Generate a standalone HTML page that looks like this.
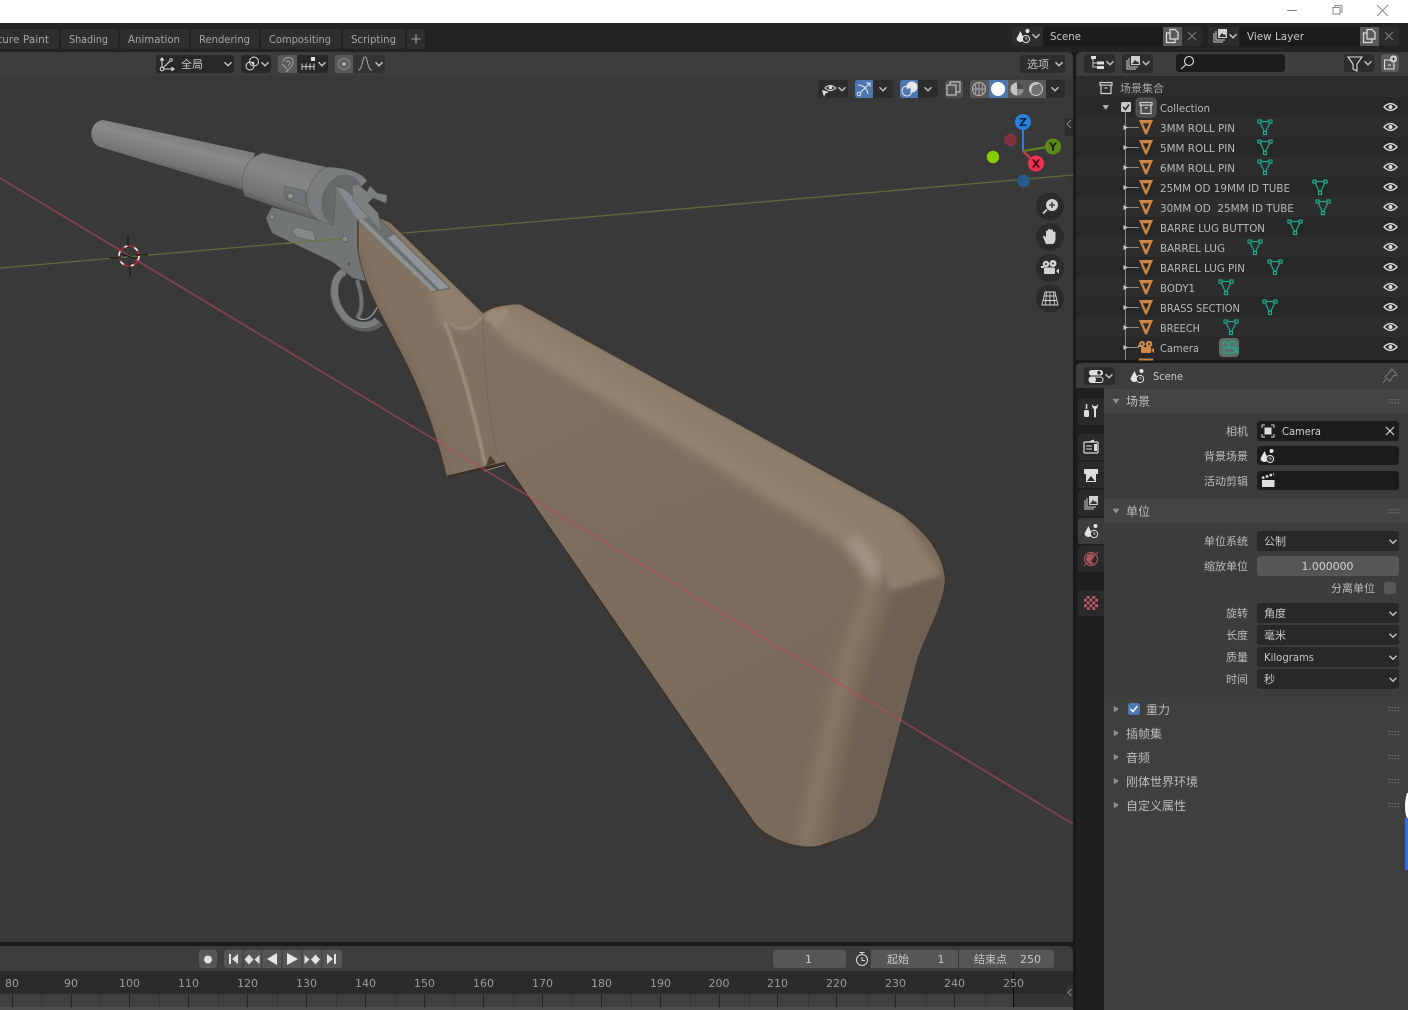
<!DOCTYPE html>
<html lang="zh">
<head>
<meta charset="utf-8">
<title>Blender</title>
<style>
html,body{margin:0;padding:0;background:#1a1a1a;width:1408px;height:1010px;overflow:hidden}
svg{display:block}
text{font-family:"DejaVu Sans","Noto Sans CJK SC",sans-serif;font-size:11px;fill:#b4b4b4;white-space:pre}
.t{fill:#a6a6a6}
.l{fill:#bdbdbd;text-anchor:end}
.o{fill:#b8b8b8}
.h{fill:#bdbdbd;font-size:12px}
.c{text-anchor:middle}
.r{fill:#9c9c9c;text-anchor:middle}
.chev{fill:none;stroke:#c4c4c4;stroke-width:1.4}
</style>
</head>
<body>
<svg width="1408" height="1010" viewBox="0 0 1408 1010" xmlns="http://www.w3.org/2000/svg">
<defs>
<filter id="b1" x="-30%" y="-30%" width="160%" height="160%"><feGaussianBlur stdDeviation="1"/></filter>
<filter id="b3" x="-30%" y="-30%" width="160%" height="160%"><feGaussianBlur stdDeviation="3.500"/></filter>
<filter id="b6" x="-30%" y="-30%" width="160%" height="160%"><feGaussianBlur stdDeviation="6"/></filter>
<linearGradient id="gBar2" gradientUnits="userSpaceOnUse" x1="180" y1="132" x2="170" y2="172"><stop offset="0" stop-color="#767878"/><stop offset=".35" stop-color="#8a8c8c"/><stop offset=".8" stop-color="#737575"/><stop offset="1" stop-color="#5c5e5e"/></linearGradient>
<linearGradient id="gThick" gradientUnits="userSpaceOnUse" x1="300" y1="158" x2="282" y2="212"><stop offset="0" stop-color="#787a7a"/><stop offset=".4" stop-color="#868888"/><stop offset=".85" stop-color="#707272"/><stop offset="1" stop-color="#525454"/></linearGradient>
<linearGradient id="gWood" gradientUnits="userSpaceOnUse" x1="500" y1="300" x2="760" y2="800"><stop offset="0" stop-color="#827261"/><stop offset=".5" stop-color="#7d6d5d"/><stop offset="1" stop-color="#7a6a5a"/></linearGradient>
<clipPath id="cWood"><path id="woodp" d="M358,220 L376,216 L390,222 L483,313 C490,308 500,304 520,304 L900,513 C925,530 945,555 945,580 C944,605 925,635 917,660 L877,813 C872,825 865,828 855,833 L820,846 C805,849 785,845 770,836 C762,832 755,825 750,817 L505,463 L492,467 L447,477 C438,440 425,400 405,360 C385,320 365,290 358,250 Z"/></clipPath>

<path id="chev" class="chev" d="M-3.500,-1.800 L0,1.800 L3.500,-1.800"/>
<g id="mesh"><path fill="#cf8644" fill-rule="evenodd" d="M-7,-7 L7,-7 L0.8,7.500 L-0.8,7.500 Z M-3.200,-3.800 L3.200,-3.800 L0,3.200 Z"/></g>
<g id="data" fill="none" stroke="#20aa88" stroke-width="1.200"><path d="M-5.500,-5.500 L5.500,-5.500 L0,6 Z"/><rect x="-7" y="-7" width="3" height="3" fill="#2a2a2a"/><rect x="4" y="-7" width="3" height="3" fill="#2a2a2a"/><rect x="-1.500" y="4.500" width="3" height="3" fill="#2a2a2a"/></g>
<g id="eye"><path d="M-6.500,0 Q0,-6.800 6.500,0 Q0,6.800 -6.500,0Z" fill="none" stroke="#dcdcdc" stroke-width="1.400"/><circle r="2" fill="#dcdcdc"/></g>
<g id="scene"><path d="M-2.500,-5 L-6.500,2.500 A3.800,3.800 0 0 0 1,3 Z" fill="#e4e4e4"/><circle cx="4.500" cy="-5" r="2" fill="#e4e4e4"/><circle cx="3" cy="3" r="3.600" fill="#333" stroke="#e4e4e4" stroke-width="1"/><path d="M3,1 V3 H4.500" stroke="#e4e4e4" stroke-width=".7" fill="none"/></g>
<g id="copy" fill="none" stroke="#e0e0e0" stroke-width="1.200"><path d="M-2,-6.500 H3 L6,-3.500 V3 H-2 Z"/><path d="M-2,-3 H-5.500 V6.500 H3 V3"/></g>
<path id="x" d="M-3.800,-3.800 L3.800,3.800 M3.800,-3.800 L-3.800,3.800" stroke="#777" stroke-width="1.200" fill="none"/>
<g id="layers" fill="none" stroke="#cfcfcf" stroke-width="1"><path d="M-6,-3 V6 H3"/><path d="M-4,-5 V4 H5"/><rect x="-2" y="-7" width="9" height="9" fill="#d0d0d0" stroke="none"/><path d="M-1,1 L2,-3 L4,-1 L5,-2 L6,1 Z" fill="#333" stroke="none"/></g>
<g id="tree"><rect x="-6" y="-7" width="5" height="3" fill="#ddd"/><path d="M-4,-4 V4 H0 M-4,0 H0" stroke="#ccc" fill="none"/><rect x="0" y="-1.500" width="7" height="3" fill="#ddd"/><rect x="0" y="3" width="7" height="3" fill="#ddd"/></g>
<g id="coll" fill="none" stroke="#d0d0d0" stroke-width="1.200"><rect x="-6" y="-5.500" width="12" height="2.600"/><path d="M-5,-2.900 V5.500 H5 V-2.900"/><path d="M-1.500,0 H1.500"/></g>
<g id="grip" fill="#777"><rect x="0" y="0" width="1.300" height="1.300"/><rect x="3" y="0" width="1.300" height="1.300"/><rect x="6" y="0" width="1.300" height="1.300"/><rect x="9" y="0" width="1.300" height="1.300"/><rect x="0" y="3" width="1.300" height="1.300"/><rect x="3" y="3" width="1.300" height="1.300"/><rect x="6" y="3" width="1.300" height="1.300"/><rect x="9" y="3" width="1.300" height="1.300"/></g>
<path id="ad" d="M-3.500,-2.200 H3.500 L0,2.800 Z" fill="#8f8f8f"/>
<path id="ar" d="M-2.200,-3.200 V3.200 L3,0 Z" fill="#8f8f8f"/>
</defs>

<!-- window bar -->
<rect width="1408" height="23" fill="#fff"/>
<path d="M1287,10.500 H1297" stroke="#8a8a8a" fill="none"/>
<path d="M1333,7.500 H1340 V14 H1333 Z M1335,7.500 V5.500 H1342 V12 H1340" stroke="#8a8a8a" fill="none"/>
<path d="M1377,5 L1388,16 M1388,5 L1377,16" stroke="#8a8a8a" fill="none"/>

<!-- top bar -->
<rect y="23" width="1408" height="29" fill="#232323"/>
<path d="M0,29 H56 Q59,29 59,32 V49 H0 Z" fill="#2e2e2e"/>
<rect x="61" y="29" width="57" height="20" rx="3" fill="#2e2e2e"/>
<rect x="120" y="29" width="69" height="20" rx="3" fill="#2e2e2e"/>
<rect x="191" y="29" width="68" height="20" rx="3" fill="#2e2e2e"/>
<rect x="261" y="29" width="80" height="20" rx="3" fill="#2e2e2e"/>
<rect x="343" y="29" width="62" height="20" rx="3" fill="#2e2e2e"/>
<rect x="407" y="29" width="18" height="20" rx="3" fill="#2e2e2e"/>
<text class="t" x="-2" y="43" textLength="51" lengthAdjust="spacingAndGlyphs">ture Paint</text>
<text class="t" x="69" y="43" textLength="39" lengthAdjust="spacingAndGlyphs">Shading</text>
<text class="t" x="128" y="43" textLength="52" lengthAdjust="spacingAndGlyphs">Animation</text>
<text class="t" x="199" y="43" textLength="51" lengthAdjust="spacingAndGlyphs">Rendering</text>
<text class="t" x="269" y="43" textLength="62" lengthAdjust="spacingAndGlyphs">Compositing</text>
<text class="t" x="351" y="43" textLength="45" lengthAdjust="spacingAndGlyphs">Scripting</text>
<path d="M416,34.500 V43.500 M411.500,39 H420.500" stroke="#a6a6a6" stroke-width="1.100"/>

<!-- scene / view layer selectors -->
<rect x="1012" y="27" width="190" height="19" rx="4" fill="#2c2c2c"/>
<rect x="1043" y="27" width="120" height="19" fill="#1c1c1c"/>
<rect x="1163" y="27" width="19" height="19" fill="#5a5a5a"/>
<use href="#scene" x="1023" y="36"/><use href="#chev" x="1036" y="36"/>
<text x="1050" y="40" textLength="31" lengthAdjust="spacingAndGlyphs" style="fill:#c8c8c8">Scene</text>
<use href="#copy" x="1172" y="36"/><use href="#x" x="1192" y="36"/>
<rect x="1208" y="27" width="191" height="19" rx="4" fill="#2c2c2c"/>
<rect x="1239" y="27" width="121" height="19" fill="#1c1c1c"/>
<rect x="1360" y="27" width="19" height="19" fill="#5a5a5a"/>
<use href="#layers" x="1220" y="36"/><use href="#chev" x="1233" y="36"/>
<text x="1247" y="40" textLength="57" lengthAdjust="spacingAndGlyphs" style="fill:#c8c8c8">View Layer</text>
<use href="#copy" x="1369" y="36"/><use href="#x" x="1389" y="36"/>

<!-- viewport -->
<path d="M0,52 H1067 Q1073,52 1073,58 V942 H0 Z" fill="#393939"/>
<path d="M0,52 H1067 Q1073,52 1073,58 V76 H0 Z" fill="#3d3d3d"/>
<path d="M0,140 Q400,110 1073,100" stroke="#3c3c3c" fill="none"/>

<!-- green axis -->
<line x1="0" y1="268" x2="1073" y2="175" stroke="#5c6b3c" stroke-width="1.300"/>

<!-- gun: barrel -->
<path d="M103,120 L255,153 L243,190 L100,147 C88,143 88,122 103,120Z" fill="url(#gBar2)"/>
<path d="M263,153 L330,168 L320,222 L245,196 C240,185 240,160 263,153Z" fill="url(#gThick)" stroke="#5a5c5c" stroke-width=".6"/>
<path d="M328,167 C345,168 362,172 367,181 L350,197 L336,187 L334,225 C320,224 305,215 307,195 C310,180 318,170 328,167Z" fill="#7a7d7d" stroke="#5a5c5c" stroke-width=".6"/>
<ellipse cx="342" cy="200" rx="20" ry="26" transform="rotate(20 342 200)" fill="#666969"/>
<!-- lug on barrel -->
<path d="M284,186 L306,191 L306,206 L285,199Z" fill="#717474" stroke="#5a5c5c" stroke-width=".6"/>
<circle cx="290.500" cy="196" r="3" fill="#8d9090" stroke="#555" stroke-width=".7"/>
<!-- trigger guard -->
<path d="M345,272 C332,276 330,300 343,315 C352,328 370,332 380,322" fill="none" stroke="#5e6060" stroke-width="8"/>
<path d="M345,271 C333,275 331,298 342,313 C350,325 367,329 377,320" fill="none" stroke="#7b7e7e" stroke-width="6.500"/>
<path d="M357,280 C364,300 362,312 357,318" fill="none" stroke="#6e7171" stroke-width="4"/>
<path d="M358,318 C366,322 372,318 378,306" fill="none" stroke="#9a9c9c" stroke-width="1.300"/>
<!-- receiver plate -->
<path d="M336,187 L334,225 L272,207 L266,218 L272,233 L333,262 L353,278 L370,282 L400,240 L345,189Z" fill="#727575" stroke="#5a5c5c" stroke-width=".5"/>
<circle cx="272" cy="217" r="2.400" fill="#8a8d8d" stroke="#555" stroke-width=".6"/>
<circle cx="345" cy="239" r="2.800" fill="#8a8d8d" stroke="#555" stroke-width=".7"/>
<circle cx="349" cy="264" r="1.500" fill="#555"/>
<path d="M297,227 L312,231 Q316,235 315,241 L300,238 Q291,235 293,229Z" fill="#858888" stroke="#5a5c5c" stroke-width=".6"/>

<!-- wood -->
<use href="#woodp" fill="url(#gWood)" stroke="#3b3126" stroke-width="1.200"/>
<g clip-path="url(#cWood)">
  <path d="M483,313 L520,304 L900,513 L945,580 L893,592 L860,540 L510,345Z" fill="#8e7e6c" filter="url(#b3)"/>
  <path d="M495,318 L767,488 C810,515 860,535 873,573" fill="none" stroke="#94846f" stroke-width="17" filter="url(#b6)"/>
  <path d="M873,573 C875,590 860,620 850,650 L815,795 L805,845" fill="none" stroke="#877764" stroke-width="16" filter="url(#b6)"/>
  <path d="M850,540 C862,550 872,560 875,580" fill="none" stroke="#a89988" stroke-width="12" filter="url(#b6)"/>
  <path d="M893,592 L950,572 L925,660 L880,830 L830,852 L833,813 L860,690Z" fill="#6e6153" filter="url(#b3)"/>
  <path d="M390,222 L483,313 L470,330 L440,325 L432,292Z" fill="#8f7f6d" filter="url(#b3)"/>
  <path d="M358,250 C365,290 385,320 405,360 C425,400 438,440 447,477" fill="none" stroke="#7a6b5c" stroke-width="10" filter="url(#b3)"/>
  <path d="M445,323 C462,365 476,420 485,465" fill="none" stroke="#a3937f" stroke-width="2.800" filter="url(#b1)"/>
  <path d="M450,323 C458,331 472,331 481,317" fill="none" stroke="#a3937f" stroke-width="1.800" filter="url(#b1)"/>
  <path d="M483,317 C484,380 490,420 497,453" fill="none" stroke="#6f6050" stroke-width=".7"/>
  <path d="M483,318 C487,310 498,306 510,310 L498,330Z" fill="#988875" filter="url(#b1)"/>
</g>
<!-- slot over wood -->
<path d="M336,187 L344,189 L376,216 L358,220Z" fill="#858a8c"/>
<path d="M358,220 L376,216 L450,288 L432,292Z" fill="#6c7070"/>
<path d="M358,220 L363,219 L437,291 L432,292Z" fill="#8b9091"/>
<path d="M395,234 L450,288 L440,290 L388,238Z" fill="#90959a"/>
<path d="M376,216 L450,288" fill="none" stroke="#565a5a" stroke-width=".8"/>
<path d="M432,292 L450,288" stroke="#6d6052" stroke-width="1"/>
<!-- hammer -->
<path d="M352,186 L358,184 L367,192 L370,186 L377,193 L387,195 L386,203 L373,198 L368,203 L378,213 L382,232 L376,226 L353,200Z" fill="#7c7f7f" stroke="#5a5c5c" stroke-width=".5"/>
<path d="M486,466 L490,455 L496,463Z" fill="#4a3f33"/>
<path d="M448,476.500 L505,463" stroke="#3a3026" stroke-width="2.200"/>
<path d="M484,471 L505,465" stroke="#a3937f" stroke-width=".8"/>

<!-- green axis over metal -->
<line x1="285" y1="243.500" x2="342" y2="238.500" stroke="#66783c" stroke-width="1.200"/>
<!-- red axis -->
<line x1="0" y1="178" x2="1073" y2="824" stroke="#c0485a" stroke-width="1.500" opacity=".62"/>

<!-- 3D cursor -->
<circle cx="129" cy="256" r="10" fill="none" stroke="#b02a30" stroke-width="1.600"/>
<circle cx="129" cy="256" r="10" fill="none" stroke="#eee" stroke-width="1.600" stroke-dasharray="4.500 6"/>
<path d="M109,258 H121 M136,255 H148 M128,236 V248 M130,263 V277 M122,254 L136,259" stroke="#111" stroke-width="1" fill="none"/>

<!-- viewport header controls -->
<rect x="156" y="55" width="78" height="18" rx="3" fill="#282828"/>
<path d="M162,60 V69 H173 M162,69 L171,60" fill="none" stroke="#ddd" stroke-width="1"/><path d="M162,57 l-2.500,3.500 h5z M175,69 l-3.500,-2.500 v5z" fill="#ddd"/><circle cx="162" cy="69" r="1.800" fill="#282828" stroke="#ddd"/><circle cx="171" cy="60" r="1.300" fill="#282828" stroke="#ddd" stroke-width=".8"/>
<text x="181" y="68" style="fill:#c8c8c8">全局</text>
<use href="#chev" x="228" y="64"/>
<rect x="241" y="55" width="30" height="18" rx="3" fill="#282828"/>
<circle cx="250" cy="66" r="4" fill="none" stroke="#ddd" stroke-width="1"/><circle cx="254" cy="61.500" r="4.500" fill="none" stroke="#ddd" stroke-width="1"/><circle cx="253" cy="63" r="1.300" fill="#ddd"/>
<use href="#chev" x="265" y="64"/>
<rect x="278" y="55" width="50" height="18" rx="3" fill="#282828"/>
<path d="M281,55 H297 V73 H281 Q278,73 278,70 V58 Q278,55 281,55Z" fill="#5a5a5a"/>
<path d="M283,62 A5.500,5.500 0 0 1 293,60 Q294,64 290,68 L286,72 M282,64 L287,69 M286,62 A2.500,2.500 0 0 1 290,62 Q290,64 288,66" fill="none" stroke="#a0a0a0" stroke-width="1"/>
<path d="M302,63.500 V70 M306,63.500 V70 M310,63.500 V70 M314,63.500 V70 M302,66.700 H314" stroke="#ddd" stroke-width=".9"/><rect x="311" y="57" width="4" height="4" fill="#e0e0e0"/>
<use href="#chev" x="322" y="64"/>
<rect x="335" y="55" width="50" height="18" rx="3" fill="#333"/>
<path d="M338,55 H353 V73 H338 Q335,73 335,70 V58 Q335,55 338,55Z" fill="#5a5a5a"/>
<circle cx="344" cy="64" r="5.500" fill="none" stroke="#8a8a8a"/><circle cx="344" cy="64" r="1.800" fill="#bbb"/>
<path d="M358,70 C363,70 362,57 365,57 C368,57 367,70 372,70" fill="none" stroke="#a6a6a6" stroke-width="1"/>
<use href="#chev" x="379" y="64"/>

<rect x="1020" y="55" width="45" height="18" rx="3" fill="#2d2d2d"/>
<text x="1027" y="68" style="fill:#c0c0c0">选项</text>
<use href="#chev" x="1059" y="64"/>

<!-- overlay row -->
<rect x="818" y="80" width="30" height="18" rx="3" fill="#2c2c2c"/>
<path d="M825,88 Q830,83 836,88 Q830,93 825,88Z" fill="none" stroke="#ddd"/><circle cx="830.500" cy="87.500" r="1.800" fill="#ddd"/><path d="M822,90 L829,92 L825.500,93.500 L824,97Z" fill="#ddd"/>
<use href="#chev" x="842" y="89"/>
<rect x="855" y="80" width="38" height="18" rx="3" fill="#2c2c2c"/>
<path d="M858,80 H873 V98 H858 Q855,98 855,95 V83 Q855,80 858,80Z" fill="#4d77b0"/>
<path d="M858,85 Q866,85 868,94 M860,93 L870,83 M866,83 H870 V87" fill="none" stroke="#e6e6e6"/><circle cx="859" cy="94" r="1.800" fill="none" stroke="#e6e6e6"/>
<use href="#chev" x="883" y="89"/>
<rect x="900" y="80" width="38" height="18" rx="3" fill="#2c2c2c"/>
<path d="M903,80 H918 V98 H903 Q900,98 900,95 V83 Q900,80 903,80Z" fill="#4d77b0"/>
<circle cx="907" cy="91" r="5" fill="none" stroke="#e6e6e6"/><circle cx="912" cy="87" r="5.500" fill="#e6e6e6"/><circle cx="909" cy="90" r="1.800" fill="#4d77b0"/>
<use href="#chev" x="928" y="89"/>
<rect x="945" y="80" width="18" height="18" rx="3" fill="#505050"/>
<path d="M947,85 H956 V95 H947Z M950,85 V82 H960 V92 H956" fill="none" stroke="#d8d8d8"/>
<rect x="970" y="80" width="95" height="18" rx="3" fill="#2c2c2c"/>
<path d="M973,80 H989 V98 H973 Q970,98 970,95 V83 Q970,80 973,80Z" fill="#585858"/>
<rect x="989" y="80" width="19" height="18" fill="#4d77b0"/>
<rect x="1008" y="80" width="19" height="18" fill="#585858"/>
<rect x="1027" y="80" width="19" height="18" fill="#585858"/>
<circle cx="979" cy="89" r="6.500" fill="none" stroke="#b8b8b8"/><path d="M972.500,89 H985.500 M979,82.500 V95.500 M975,84 Q977,89 975,94 M983,84 Q981,89 983,94" fill="none" stroke="#b8b8b8" stroke-width=".8"/>
<circle cx="998" cy="89" r="7" fill="#fff"/>
<circle cx="1017" cy="89" r="6.500" fill="#c4c4c4"/><path d="M1017,89 V82.500 A6.500,6.500 0 0 1 1023.500,89Z" fill="#4c4c4c"/><path d="M1017,89 H1023.500 A6.500,6.500 0 0 1 1017,95.500Z" fill="#8c8c8c"/>
<circle cx="1036" cy="89" r="6.500" fill="#707070" stroke="#c8c8c8"/><path d="M1031,92 A6,6 0 0 1 1038,84" fill="none" stroke="#d8d8d8" stroke-width="1.400"/>
<use href="#chev" x="1055" y="89"/>

<!-- nav gizmo -->
<path d="M1065,118 H1073 V136 H1065 Z" fill="#2c2c2c"/>
<path d="M1071,120 L1067,124 L1071,128" fill="none" stroke="#888"/>
<line x1="1023" y1="151" x2="1023" y2="128" stroke="#2a80e0" stroke-width="2"/>
<line x1="1023" y1="151" x2="1047" y2="147" stroke="#5c8a1a" stroke-width="2"/>
<line x1="1023" y1="151" x2="1032" y2="160" stroke="#d83a4e" stroke-width="2"/>
<circle cx="1010.500" cy="140" r="6.200" fill="#82323f"/>
<circle cx="993" cy="157" r="6.200" fill="#84cc00"/>
<circle cx="1023.500" cy="181" r="6.200" fill="#2b5a8c"/>
<circle cx="1023" cy="122" r="8" fill="#2a80e0"/>
<circle cx="1053" cy="146.500" r="8" fill="#5c8a1a"/>
<circle cx="1036" cy="163.500" r="8" fill="#ef3050"/>
<text x="1023" y="126" class="c" style="fill:#10243c;font-weight:bold;font-size:11px">Z</text>
<text x="1053" y="150.500" class="c" style="fill:#1a2606;font-weight:bold;font-size:11px">Y</text>
<text x="1036" y="167.500" class="c" style="fill:#3c0a12;font-weight:bold;font-size:11px">X</text>

<circle cx="1050" cy="206.500" r="14" fill="#2b2b2b"/>
<circle cx="1052" cy="205" r="6" fill="#d4d4d4"/><path d="M1052,202 V208 M1049,205 H1055" stroke="#2b2b2b" stroke-width="1.300"/><path d="M1047,209.500 L1043,213.500" stroke="#d4d4d4" stroke-width="1.800"/>
<circle cx="1050" cy="237" r="14" fill="#2b2b2b"/>
<path d="M1046,244 L1043,237 Q1043,235 1045,236 L1046,238 V231 Q1047,230 1048,231 V236 V229.500 Q1049.500,228.500 1050.500,229.500 V236 V230 Q1052,229 1053,230 V237 V232 Q1054.500,231 1055.500,232 V239 Q1055,243 1053,244Z" fill="#d4d4d4"/>
<circle cx="1050" cy="268" r="14" fill="#2b2b2b"/>
<circle cx="1046" cy="264" r="3.200" fill="#d4d4d4"/><circle cx="1053" cy="263.500" r="3.500" fill="#d4d4d4"/><rect x="1044" y="267.500" width="11" height="6.500" rx="1" fill="#d4d4d4"/><path d="M1056,271 L1059,268.500 V274Z M1041,266 H1044 V268 H1041Z" fill="#d4d4d4"/><circle cx="1046" cy="264" r="1" fill="#2b2b2b"/><circle cx="1053" cy="263.500" r="1" fill="#2b2b2b"/>
<circle cx="1050" cy="298.500" r="14" fill="#2b2b2b"/>
<path d="M1045,292 H1055 L1058,305 H1042Z M1050,292 V305 M1046.500,292 L1045.500,305 M1053.500,292 L1054.500,305 M1044,296 H1056 M1043,300.500 H1057" fill="none" stroke="#d4d4d4" stroke-width=".9"/>

<!-- timeline -->
<rect x="0" y="942" width="1076" height="4" fill="#1a1a1a"/>
<path d="M0,946 H1067 Q1073,946 1073,952 V1010 H0Z" fill="#3d3d3d"/>
<rect x="0" y="971" width="1073" height="23" fill="#2b2b2b"/>
<rect x="0" y="994" width="1013" height="13" fill="#404040"/>
<rect x="1013" y="994" width="60" height="13" fill="#353535"/>
<rect x="0" y="1007" width="1073" height="3" fill="#4f4f4f"/>
<path stroke="#363636" d="M41.500,994V1007M100.500,994V1007M159.500,994V1007M218.500,994V1007M277.500,994V1007M336.500,994V1007M395.500,994V1007M454.500,994V1007M513.500,994V1007M572.500,994V1007M631.500,994V1007M690.500,994V1007M749.500,994V1007M808.500,994V1007M867.500,994V1007M926.500,994V1007M985.500,994V1007M1042.500,994V1007"/>
<path stroke="#232323" d="M12.500,994V1007M71.500,994V1007M129.500,994V1007M188.500,994V1007M247.500,994V1007M306.500,994V1007M365.500,994V1007M424.500,994V1007M483.500,994V1007M542.500,994V1007M601.500,994V1007M660.500,994V1007M719.500,994V1007M777.500,994V1007M836.500,994V1007M895.500,994V1007M954.500,994V1007"/>
<path stroke="#0c0c0c" d="M1013.500,971V1007"/>
<text class="r" x="12" y="987">80</text><text class="r" x="71" y="987">90</text><text class="r" x="129.500" y="987">100</text><text class="r" x="188.500" y="987">110</text><text class="r" x="247.500" y="987">120</text><text class="r" x="306.500" y="987">130</text><text class="r" x="365.500" y="987">140</text><text class="r" x="424.500" y="987">150</text><text class="r" x="483.500" y="987">160</text><text class="r" x="542.500" y="987">170</text><text class="r" x="601.500" y="987">180</text><text class="r" x="660.500" y="987">190</text><text class="r" x="719" y="987">200</text><text class="r" x="777.500" y="987">210</text><text class="r" x="836.500" y="987">220</text><text class="r" x="895.500" y="987">230</text><text class="r" x="954.500" y="987">240</text><text class="r" x="1013.500" y="987">250</text>
<rect x="1066" y="985" width="7" height="15" rx="2" fill="#333"/><path d="M1071.500,989 L1068,992.500 L1071.500,996" fill="none" stroke="#888"/>

<rect x="199" y="950" width="18" height="18" rx="3" fill="#565656"/>
<circle cx="208" cy="959.500" r="4" fill="#e0e0e0"/>
<rect x="224" y="950" width="118" height="18" rx="3" fill="#565656"/>
<path d="M243,950V968M262,950V968M282,950V968M302,950V968M322,950V968" stroke="#3a3a3a"/>
<path d="M229,954 H231 V964 H229Z M238,954 V964 L232,959Z" fill="#e0e0e0"/>
<path d="M249,954.500 L253.500,959.500 L249,964.500 L244.500,959.500Z M259.500,955 V964 L254.500,959.500Z" fill="#e0e0e0"/>
<path d="M277,953 V965 L267,959Z" fill="#e8e8e8"/>
<path d="M287,953 V965 L298,959Z" fill="#e8e8e8"/>
<path d="M315.500,954.500 L320,959.500 L315.500,964.500 L311,959.500Z M304.500,955 V964 L309.500,959.500Z" fill="#e0e0e0"/>
<path d="M327,954 V964 L333,959Z M334,954 H336 V964 H334Z" fill="#e0e0e0"/>

<rect x="773" y="950" width="73" height="18" rx="3" fill="#565656"/>
<text x="808.500" y="963" class="c" style="fill:#d0d0d0">1</text>
<rect x="853" y="950" width="201" height="18" rx="3" fill="#565656"/>
<path d="M856,950 H871 V968 H856 Q853,968 853,965 V953 Q853,950 856,950Z" fill="#3c3c3c"/>
<path d="M958.500,950V968" stroke="#3a3a3a"/>
<circle cx="862" cy="960" r="5.500" fill="none" stroke="#d8d8d8"/><path d="M859.500,952.500 H864.500 M862,953 V954.500 M862,957 V960.500 H865" fill="none" stroke="#d8d8d8"/>
<text x="887" y="963" style="fill:#c8c8c8">起始</text>
<text x="941" y="963" class="c" style="fill:#c8c8c8">1</text>
<text x="974" y="963" style="fill:#c8c8c8">结束点</text>
<text x="1020" y="963" textLength="21" lengthAdjust="spacingAndGlyphs" style="fill:#c8c8c8">250</text>

<!-- outliner -->
<rect x="1073" y="52" width="335" height="958" fill="#1a1a1a"/>
<path d="M1076,58 Q1076,52 1082,52 H1408 V360 H1076Z" fill="#2a2a2a"/>
<path d="M1076,58 Q1076,52 1082,52 H1408 V76 H1076Z" fill="#3d3d3d"/>
<path fill="#2d2d2d" d="M1076,77h332v20h-332z M1076,117h332v20h-332z M1076,157h332v20h-332z M1076,197h332v20h-332z M1076,237h332v20h-332z M1076,277h332v20h-332z M1076,317h332v20h-332z"/>
<path fill="#282828" d="M1076,97h332v20h-332z M1076,137h332v20h-332z M1076,177h332v20h-332z M1076,217h332v20h-332z M1076,257h332v20h-332z M1076,297h332v20h-332z M1076,337h332v20h-332z M1076,357h332v3h-332z"/>

<rect x="1084" y="54" width="31" height="19" rx="3" fill="#2c2c2c"/>
<use href="#tree" x="1097" y="63"/><use href="#chev" x="1110" y="63"/>
<rect x="1122" y="54" width="31" height="19" rx="3" fill="#2c2c2c"/>
<use href="#layers" x="1133" y="63"/><use href="#chev" x="1146" y="63"/>
<rect x="1176" y="54" width="109" height="18" rx="3" fill="#1c1c1c"/>
<circle cx="1189" cy="61" r="4.500" fill="none" stroke="#ddd" stroke-width="1.100"/><path d="M1186,64.500 L1181,69" stroke="#ddd" stroke-width="1.100"/>
<rect x="1344" y="54" width="30" height="18" rx="3" fill="#2c2c2c"/>
<path d="M1348,57 H1362 L1357,64 V71 L1353,69 V64Z" fill="none" stroke="#ddd" stroke-width="1.100"/>
<use href="#chev" x="1368" y="63"/>
<rect x="1381" y="54" width="18" height="18" rx="3" fill="#5a5a5a"/>
<path d="M1384,60 H1392 M1384.500,60 V69 H1394 V63" fill="none" stroke="#ddd" stroke-width="1.100"/><circle cx="1393.500" cy="59" r="3.500" fill="#ddd"/><path d="M1393.500,57V61M1391.500,59H1395.500" stroke="#444"/><path d="M1388,65H1391" stroke="#ddd"/>

<use href="#coll" x="1106" y="88"/>
<text x="1120" y="92" style="fill:#a8a8a8">场景集合</text>

<path d="M1102.500,105 H1109 L1105.700,110Z" fill="#b0b0b0"/>
<rect x="1121" y="102" width="10" height="10" rx="1.500" fill="#c8c8c8"/>
<path d="M1123,107 L1125.500,109.500 L1129,104.500" fill="none" stroke="#222" stroke-width="1.500"/>
<rect x="1136" y="98" width="20" height="19" rx="4" fill="#4a4a4a" stroke="#5c5c5c"/>
<use href="#coll" x="1146" y="108"/>
<text class="o" x="1160" y="112" textLength="50" lengthAdjust="spacingAndGlyphs">Collection</text>
<use href="#eye" x="1390.500" y="107"/>

<path d="M1125.500,112 V360" stroke="#8a8a8a"/>
<path stroke="#8a8a8a" d="M1126,127.500H1139M1126,147.500H1139M1126,167.500H1139M1126,187.500H1139M1126,207.500H1139M1126,227.500H1139M1126,247.500H1139M1126,267.500H1139M1126,287.500H1139M1126,307.500H1139M1126,327.500H1139M1126,347.500H1139"/>
<g fill="#c8c8c8"><path d="M1123.500,125 V130 L1128,127.500Z"/><path d="M1123.500,145 V150 L1128,147.500Z"/><path d="M1123.500,165 V170 L1128,167.500Z"/><path d="M1123.500,185 V190 L1128,187.500Z"/><path d="M1123.500,205 V210 L1128,207.500Z"/><path d="M1123.500,225 V230 L1128,227.500Z"/><path d="M1123.500,245 V250 L1128,247.500Z"/><path d="M1123.500,265 V270 L1128,267.500Z"/><path d="M1123.500,285 V290 L1128,287.500Z"/><path d="M1123.500,305 V310 L1128,307.500Z"/><path d="M1123.500,325 V330 L1128,327.500Z"/><path d="M1123.500,345 V350 L1128,347.500Z"/></g>

<use href="#mesh" x="1146" y="127"/><text class="o" x="1160" y="132" textLength="75" lengthAdjust="spacingAndGlyphs">3MM ROLL PIN</text><use href="#data" x="1265" y="127"/><use href="#eye" x="1390.500" y="127"/>
<use href="#mesh" x="1146" y="147"/><text class="o" x="1160" y="152" textLength="75" lengthAdjust="spacingAndGlyphs">5MM ROLL PIN</text><use href="#data" x="1265" y="147"/><use href="#eye" x="1390.500" y="147"/>
<use href="#mesh" x="1146" y="167"/><text class="o" x="1160" y="172" textLength="75" lengthAdjust="spacingAndGlyphs">6MM ROLL PIN</text><use href="#data" x="1265" y="167"/><use href="#eye" x="1390.500" y="167"/>
<use href="#mesh" x="1146" y="187"/><text class="o" x="1160" y="192" textLength="130" lengthAdjust="spacingAndGlyphs">25MM OD 19MM ID TUBE</text><use href="#data" x="1320" y="187"/><use href="#eye" x="1390.500" y="187"/>
<use href="#mesh" x="1146" y="207"/><text class="o" x="1160" y="212" textLength="134" lengthAdjust="spacingAndGlyphs">30MM OD  25MM ID TUBE</text><use href="#data" x="1323" y="207"/><use href="#eye" x="1390.500" y="207"/>
<use href="#mesh" x="1146" y="227"/><text class="o" x="1160" y="232" textLength="105" lengthAdjust="spacingAndGlyphs">BARRE LUG BUTTON</text><use href="#data" x="1295" y="227"/><use href="#eye" x="1390.500" y="227"/>
<use href="#mesh" x="1146" y="247"/><text class="o" x="1160" y="252" textLength="65" lengthAdjust="spacingAndGlyphs">BARREL LUG</text><use href="#data" x="1255" y="247"/><use href="#eye" x="1390.500" y="247"/>
<use href="#mesh" x="1146" y="267"/><text class="o" x="1160" y="272" textLength="85" lengthAdjust="spacingAndGlyphs">BARREL LUG PIN</text><use href="#data" x="1275" y="267"/><use href="#eye" x="1390.500" y="267"/>
<use href="#mesh" x="1146" y="287"/><text class="o" x="1160" y="292" textLength="35" lengthAdjust="spacingAndGlyphs">BODY1</text><use href="#data" x="1226" y="287"/><use href="#eye" x="1390.500" y="287"/>
<use href="#mesh" x="1146" y="307"/><text class="o" x="1160" y="312" textLength="80" lengthAdjust="spacingAndGlyphs">BRASS SECTION</text><use href="#data" x="1270" y="307"/><use href="#eye" x="1390.500" y="307"/>
<use href="#mesh" x="1146" y="327"/><text class="o" x="1160" y="332" textLength="40" lengthAdjust="spacingAndGlyphs">BREECH</text><use href="#data" x="1231" y="327"/><use href="#eye" x="1390.500" y="327"/>

<g fill="#d08a4c"><circle cx="1142" cy="344" r="3"/><circle cx="1149" cy="344" r="3.300"/><rect x="1141" y="347" width="10" height="6" rx="1"/><path d="M1151,350 L1154,348 V353Z M1138,345 H1141 V347 H1138Z"/></g>
<circle cx="1142" cy="344" r="1" fill="#2a2a2a"/><circle cx="1149" cy="344" r="1" fill="#2a2a2a"/>
<text class="o" x="1160" y="352" textLength="39" lengthAdjust="spacingAndGlyphs">Camera</text>
<rect x="1219" y="338" width="20" height="19" rx="4" fill="#5e6e68"/>
<g fill="none" stroke="#1fb08c" stroke-width="1"><circle cx="1225.500" cy="345" r="3"/><circle cx="1232" cy="344.500" r="3.300"/><path d="M1224,348 H1235 V353 H1224Z M1235,350 L1238,348 V353Z"/></g>
<use href="#eye" x="1390.500" y="347"/>
<rect x="1139" y="358.500" width="14" height="2" fill="#c5843f"/>

<!-- properties -->
<path d="M1076,369 Q1076,363 1082,363 H1408 V1010 H1076Z" fill="#3c3c3c"/>
<rect x="1076" y="388" width="28" height="622" fill="#1f1f1f"/>
<path d="M1076,369 Q1076,363 1082,363 H1408 V388 H1076Z" fill="#3d3d3d"/>
<rect x="1084" y="367" width="31" height="18" rx="3" fill="#2c2c2c"/>
<rect x="1089" y="370" width="14" height="5.500" rx="2.700" fill="#ddd"/><rect x="1089" y="377" width="14" height="5.500" rx="2.700" fill="none" stroke="#ddd"/><circle cx="1099" cy="372.700" r="1.800" fill="#2c2c2c"/><rect x="1089" y="377" width="7" height="5.500" rx="2.700" fill="#ddd"/>
<use href="#chev" x="1109" y="376"/>
<use href="#scene" x="1137" y="376"/>
<text x="1153" y="380" textLength="30" lengthAdjust="spacingAndGlyphs" style="fill:#c8c8c8">Scene</text>
<path d="M1392,369 L1397,375 L1393,376 L1390,381 L1385,377 L1388,374 Z M1386,379 L1383,383" fill="none" stroke="#777" stroke-width="1.100"/>

<!-- tabs -->
<g fill="#2a2a2a"><path d="M1081,398 H1104 V425 H1081 Q1078,425 1078,422 V401 Q1078,398 1081,398Z"/><path d="M1081,434 H1104 V460 H1081 Q1078,460 1078,457 V437 Q1078,434 1081,434Z"/><rect x="1078" y="462" width="30" height="26" rx="3"/><rect x="1078" y="490" width="30" height="26" rx="3"/><rect x="1078" y="546" width="30" height="26" rx="3"/><rect x="1078" y="590" width="30" height="26" rx="3"/></g>
<path d="M1081,518 H1104 V544 H1081 Q1078,544 1078,541 V521 Q1078,518 1081,518Z" fill="#3c3c3c"/>
<rect x="1104" y="388" width="304" height="622" fill="#3c3c3c"/>
<!-- tool -->
<path d="M1086.500,404 V409" stroke="#ddd" stroke-width="1.500"/><rect x="1084" y="410" width="5" height="7" rx="1.500" fill="#ddd"/>
<path d="M1092,404 Q1092,408 1094,409 V417 Q1095,418 1096,417 V409 Q1098,408 1098,404 L1096.500,406 H1093.500Z" fill="#ddd"/>
<!-- render -->
<rect x="1084" y="442" width="14" height="11" rx="1" fill="none" stroke="#ddd" stroke-width="1.200"/><rect x="1094" y="444" width="3" height="7" fill="#ddd"/><path d="M1086,446H1092M1086,449H1092" stroke="#ddd"/><path d="M1087,442L1094,439.500V442" fill="#ddd"/>
<!-- output -->
<rect x="1084" y="469" width="14" height="5" fill="#ddd"/><rect x="1086" y="474" width="10" height="8" fill="#ddd"/><path d="M1087,481 L1091,476 L1095,481Z" fill="#2a2a2a"/>
<!-- view layer -->
<use href="#layers" x="1091" y="503"/>
<!-- scene -->
<use href="#scene" x="1091" y="531"/>
<!-- world -->
<circle cx="1091" cy="559" r="6.500" fill="none" stroke="#a8525a" stroke-width="1.200"/><path d="M1087,555 L1092,553.500 L1095,556 L1091,561 L1094,564 L1090,564.500 L1086,560Z" fill="#a8525a"/><path d="M1084,566 L1098,552" stroke="#a8525a"/>
<!-- texture -->
<rect x="1084" y="596" width="14" height="14" fill="#b85c68"/>
<path fill="#2e2428" d="M1084,596h2.800v2.800h-2.800zM1089.600,596h2.800v2.800h-2.800zM1095.200,596h2.800v2.800h-2.800zM1086.800,598.800h2.800v2.800h-2.800zM1092.400,598.800h2.800v2.800h-2.800zM1084,601.600h2.800v2.800h-2.800zM1089.600,601.600h2.800v2.800h-2.800zM1095.200,601.600h2.800v2.800h-2.800zM1086.800,604.400h2.800v2.800h-2.800zM1092.400,604.400h2.800v2.800h-2.800zM1084,607.200h2.800v2.800h-2.800zM1089.600,607.200h2.800v2.800h-2.800zM1095.200,607.200h2.800v2.800h-2.800z"/>

<!-- panel: scene -->
<rect x="1104" y="389" width="304" height="24" fill="#444"/>
<use href="#ad" x="1116" y="401"/>
<text class="h" x="1126" y="405.500">场景</text>
<use href="#grip" x="1388.500" y="399"/>
<text class="l" x="1248" y="435">相机</text>
<text class="l" x="1248" y="460">背景场景</text>
<text class="l" x="1248" y="485">活动剪辑</text>
<rect x="1257" y="421" width="142" height="20" rx="3" fill="#1c1c1c"/>
<path d="M1262,428V425H1265M1271,425H1274V428M1274,434V437H1271M1265,437H1262V434" fill="none" stroke="#ddd"/><rect x="1264.500" y="427.500" width="7" height="7" fill="#ddd"/>
<text x="1282" y="435" textLength="39" lengthAdjust="spacingAndGlyphs" style="fill:#d0d0d0">Camera</text>
<path d="M1386,427 L1394,435 M1394,427 L1386,435" stroke="#ddd" stroke-width="1.100"/>
<rect x="1257" y="446" width="142" height="19" rx="3" fill="#1c1c1c"/>
<use href="#scene" x="1267" y="456"/>
<rect x="1257" y="471" width="142" height="19" rx="3" fill="#1c1c1c"/>
<rect x="1262" y="480" width="12.500" height="7" fill="#e0e0e0"/><path d="M1262,478 L1274,474" stroke="#e0e0e0" stroke-width="2.400" stroke-dasharray="2.500 1.500"/>

<!-- panel: units -->
<rect x="1104" y="499" width="304" height="24" fill="#444"/>
<use href="#ad" x="1116" y="511"/>
<text class="h" x="1126" y="515.500">单位</text>
<use href="#grip" x="1388.500" y="509"/>
<text class="l" x="1248" y="545">单位系统</text>
<text class="l" x="1248" y="570">缩放单位</text>
<text class="l" x="1375" y="592">分离单位</text>
<text class="l" x="1248" y="617">旋转</text>
<text class="l" x="1248" y="639">长度</text>
<text class="l" x="1248" y="661">质量</text>
<text class="l" x="1248" y="683">时间</text>
<rect x="1257" y="531" width="142" height="20" rx="3" fill="#282828"/>
<text x="1264" y="545" style="fill:#c8c8c8">公制</text><use href="#chev" x="1393" y="541.500"/>
<rect x="1257" y="556" width="142" height="20" rx="3" fill="#565656"/>
<text x="1327.500" y="570" class="c" style="fill:#d4d4d4" textLength="52" lengthAdjust="spacingAndGlyphs">1.000000</text>
<rect x="1384" y="582" width="12" height="12" rx="2.500" fill="#585858"/>
<rect x="1257" y="603" width="142" height="20" rx="3" fill="#282828"/>
<text x="1264" y="617" style="fill:#c8c8c8">角度</text><use href="#chev" x="1393" y="613.500"/>
<rect x="1257" y="625" width="142" height="20" rx="3" fill="#282828"/>
<text x="1264" y="639" style="fill:#c8c8c8">毫米</text><use href="#chev" x="1393" y="635.500"/>
<rect x="1257" y="647" width="142" height="20" rx="3" fill="#282828"/>
<text x="1264" y="661" textLength="50" lengthAdjust="spacingAndGlyphs" style="fill:#c8c8c8">Kilograms</text><use href="#chev" x="1393" y="657.500"/>
<rect x="1257" y="669" width="142" height="20" rx="3" fill="#282828"/>
<text x="1264" y="683" style="fill:#c8c8c8">秒</text><use href="#chev" x="1393" y="679.500"/>

<!-- closed panels -->
<rect x="1104" y="697" width="304" height="313" fill="#3f3f3f"/>
<use href="#ar" x="1116" y="709"/>
<rect x="1128" y="703" width="12" height="12" rx="2.500" fill="#4d77b0"/>
<path d="M1130.500,709 L1133,711.500 L1137.500,706" fill="none" stroke="#f0f0f0" stroke-width="1.600"/>
<text class="h" x="1146" y="714">重力</text><use href="#grip" x="1388.500" y="707"/>
<use href="#ar" x="1116" y="733"/><text class="h" x="1126" y="738">插帧集</text><use href="#grip" x="1388.500" y="731"/>
<use href="#ar" x="1116" y="757"/><text class="h" x="1126" y="762">音频</text><use href="#grip" x="1388.500" y="755"/>
<use href="#ar" x="1116" y="781"/><text class="h" x="1126" y="786">刚体世界环境</text><use href="#grip" x="1388.500" y="779"/>
<use href="#ar" x="1116" y="805"/><text class="h" x="1126" y="810">自定义属性</text><use href="#grip" x="1388.500" y="803"/>

<!-- edge artifact -->
<path d="M1408,793 H1407 Q1405,800 1405,806 Q1405,814 1407,818 H1408Z" fill="#fff"/>
<rect x="1405" y="818" width="3" height="52" fill="#2f6de0"/>
</svg>
</body>
</html>
